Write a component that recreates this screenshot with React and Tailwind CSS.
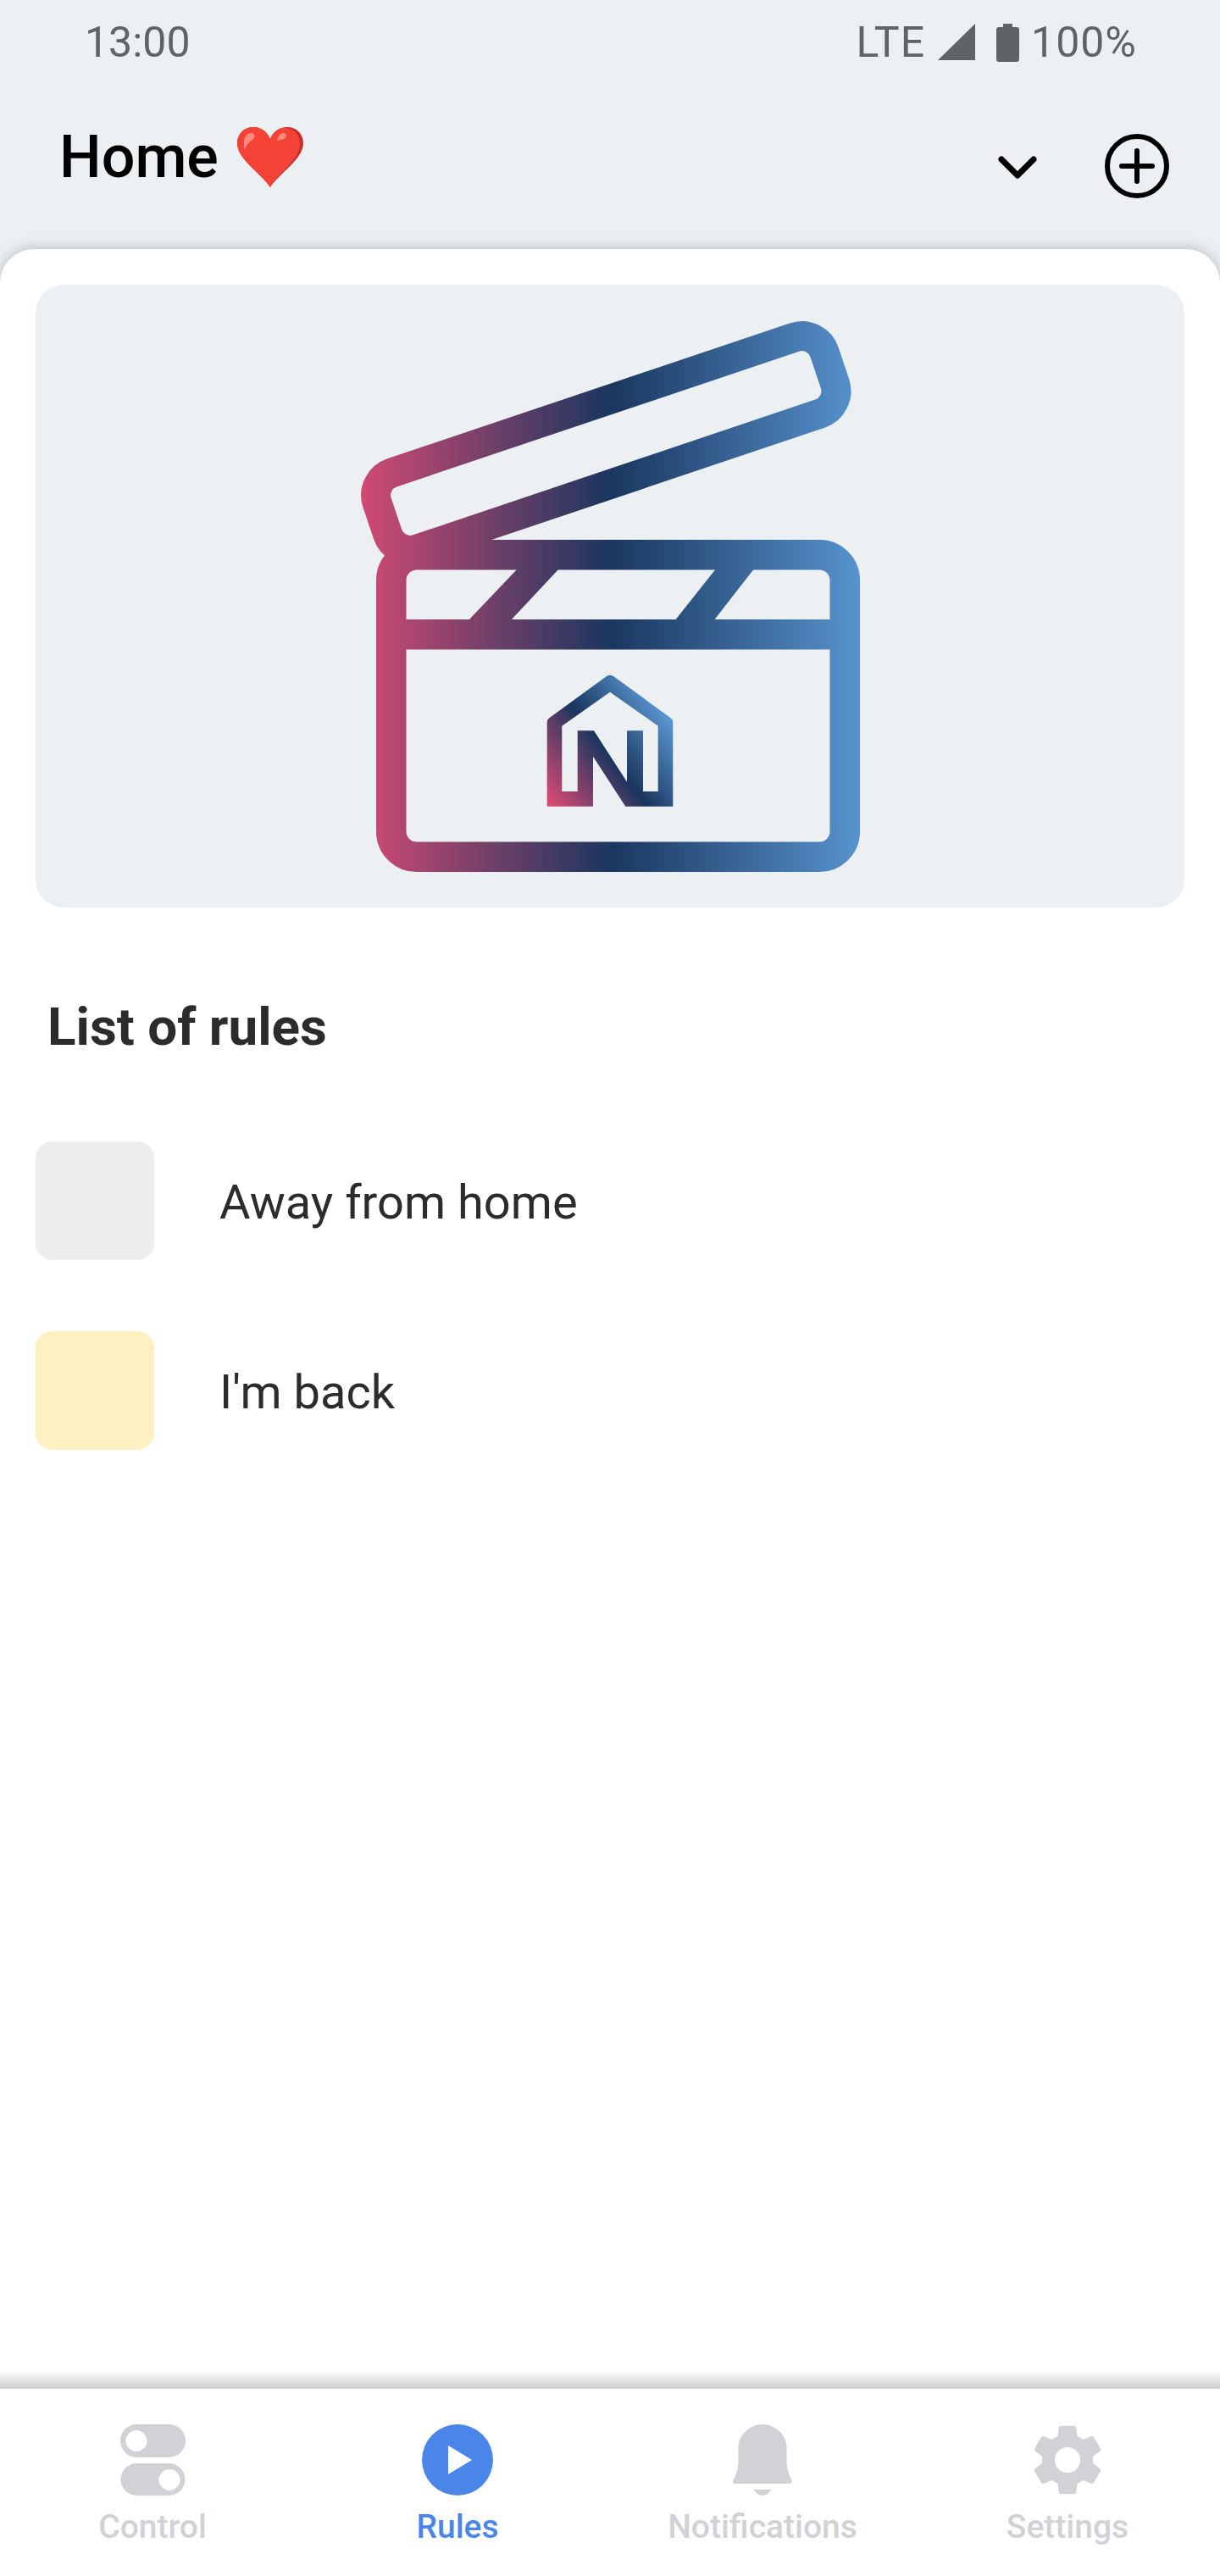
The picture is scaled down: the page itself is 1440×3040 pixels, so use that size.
import React from "react";

function SignalIcon() {
  return (
    <svg width="44" height="44" viewBox="0 0 44 44" className="fill-[#5f6368]">
      <path d="M44 0V43H0Z" />
    </svg>
  );
}

function BatteryIcon() {
  return (
    <svg width="27" height="45" viewBox="0 0 27 45" className="fill-[#5f6368]">
      <path d="M8 0h11v4h5a3 3 0 0 1 3 3v35a3 3 0 0 1-3 3H3a3 3 0 0 1-3-3V7a3 3 0 0 1 3-3h5Z" />
    </svg>
  );
}

function HeartIcon() {
  return (
    <svg width="78" height="71" viewBox="0 0 78 71" className="ml-[22px]">
      <path
        d="M39 71C28 54 0 38 0 19C0 8 8 0 19 0C28 0 35 5 39 14C43 5 50 0 59 0C70 0 78 8 78 19C78 38 50 54 39 71Z"
        fill="#c62f2b"
      />
      <path
        d="M39 71C28 54 0 38 0 19C0 8 8 0 19 0C28 0 35 5 39 14C43 5 50 0 57 1C67 2 74 9 74 20C74 38 49 54 39 71Z"
        fill="#f44336"
      />
      <path d="M9 27C6 16 9 8 16 7C21 7 22 12 18 15C13 18 10 22 9 27Z" fill="#ff8a80" />
      <path d="M47 16C48 10 52 7 55 7C59 8 59 12 55 14C52 15 49 15 47 16Z" fill="#ff8a80" />
    </svg>
  );
}

function Clapper() {
  return (
    <svg width="600" height="667" viewBox="420 370 600 667">
      <defs>
        <linearGradient id="clap" gradientUnits="userSpaceOnUse" x1="426" y1="0" x2="1015" y2="0">
          <stop offset="0" stopColor="#d04a73" />
          <stop offset="0.5" stopColor="#1a365f" />
          <stop offset="1" stopColor="#5793cd" />
        </linearGradient>
        <linearGradient
          id="clapTilted"
          gradientUnits="userSpaceOnUse"
          x1="426"
          y1="0"
          x2="1015"
          y2="0"
          gradientTransform="rotate(18.6 715.3 523)"
        >
          <stop offset="0" stopColor="#d04a73" />
          <stop offset="0.5" stopColor="#1a365f" />
          <stop offset="1" stopColor="#5793cd" />
        </linearGradient>
        <linearGradient id="logo" gradientUnits="userSpaceOnUse" x1="650" y1="950" x2="790" y2="845">
          <stop offset="0" stopColor="#d94a75" />
          <stop offset="0.52" stopColor="#1a365f" />
          <stop offset="1" stopColor="#5b98d2" />
        </linearGradient>
      </defs>
      <rect
        x="436.8"
        y="475.5"
        width="557"
        height="95"
        rx="28"
        fill="none"
        stroke="url(#clapTilted)"
        strokeWidth="35"
        transform="rotate(-18.6 715.3 523)"
      />
      <rect x="461.75" y="654.75" width="535.5" height="356.5" rx="30" fill="none" stroke="url(#clap)" strokeWidth="35.5" />
      <path d="M461 731H997V766.5H461Z" fill="url(#clap)" />
      <path d="M612 670H661L602 733H552Z" fill="url(#clap)" />
      <path d="M846 670H891L842 733H796Z" fill="url(#clap)" />
      <path
        fillRule="evenodd"
        fill="url(#logo)"
        d="M645.7 852Q645.7 849 648 847.5L716 798Q720 795.5 724 798L792 847.5Q794.3 849 794.3 852V951.7H738.3L700 892.7V951.7H645.7ZM720 816.7L663.3 856.7V934H681.7V862.3H701L740 922.7V862.3H759V934H776.7V856.7Z"
      />
    </svg>
  );
}

function ToggleIcon() {
  return (
    <svg width="77" height="84" viewBox="0 0 77 84" className="fill-[#d1d1d6]">
      <path
        fillRule="evenodd"
        d="M19.5 0h38a19.5 19.5 0 0 1 0 39h-38a19.5 19.5 0 0 1 0-39ZM19 7a12.5 12.5 0 1 0 0 25a12.5 12.5 0 0 0 0-25Z"
      />
      <path
        fillRule="evenodd"
        d="M19.5 46h38a19 19 0 0 1 0 38h-38a19 19 0 0 1 0-38ZM58 53a12.5 12.5 0 1 0 0 25a12.5 12.5 0 0 0 0-25Z"
      />
    </svg>
  );
}

function PlayIcon() {
  return (
    <svg width="84" height="84" viewBox="0 0 84 84">
      <circle cx="42" cy="42" r="42" fill="#4a86e8" />
      <path d="M31 25L59 42L31 59Z" fill="#fff" />
    </svg>
  );
}

function BellIcon() {
  return (
    <svg width="70" height="84" viewBox="0 0 70 84" className="fill-[#d1d1d6]">
      <path d="M35 0C48 0 63.5 11 63.5 27V43C63.5 52 66 59 69.5 66C70.5 68 69.5 70 67 70H3C.5 70-.5 68 .5 66C4 59 6.5 52 6.5 43V27C6.5 11 22 0 35 0Z" />
      <path d="M25 77H45C43 81 39.5 84 35 84C30.5 84 27 81 25 77Z" />
    </svg>
  );
}

function GearIcon() {
  return (
    <svg width="84" height="84" viewBox="2 2 20 20" className="fill-[#d1d1d6]">
      <path d="M19.14 12.94c.04-.3.06-.61.06-.94 0-.32-.02-.64-.07-.94l2.03-1.58c.18-.14.23-.41.12-.61l-1.92-3.32c-.12-.22-.37-.29-.59-.22l-2.39.96c-.5-.38-1.03-.7-1.62-.94l-.36-2.54c-.04-.24-.24-.41-.48-.41h-3.84c-.24 0-.43.17-.47.41l-.36 2.54c-.59.24-1.13.57-1.62.94l-2.39-.96c-.22-.08-.47 0-.59.22L2.74 8.87c-.12.21-.08.47.12.61l2.03 1.58c-.05.3-.09.63-.09.94s.02.64.07.94l-2.03 1.58c-.18.14-.23.41-.12.61l1.92 3.32c.12.22.37.29.59.22l2.39-.96c.5.38 1.03.7 1.62.94l.36 2.54c.05.24.24.41.48.41h3.84c.24 0 .44-.17.47-.41l.36-2.54c.59-.24 1.13-.56 1.62-.94l2.39.96c.22.08.47 0 .59-.22l1.92-3.32c.12-.22.07-.47-.12-.61l-2.01-1.58zM12 15.6c-1.98 0-3.6-1.62-3.6-3.6s1.62-3.6 3.6-3.6 3.6 1.62 3.6 3.6-1.62 3.6-3.6 3.6z" />
    </svg>
  );
}

function NavItem({ icon, label, active }) {
  return (
    <div className="flex flex-col items-center">
      {icon}
      <span
        className={
          "mt-[15px] text-[39px] leading-[44px] font-medium " +
          (active ? "text-[#4a86e8]" : "text-[#d1d1d6]")
        }
      >
        {label}
      </span>
    </div>
  );
}

function RuleRow({ color, name }) {
  return (
    <div className="flex items-center">
      <div className={"w-[140px] h-[140px] rounded-[20px] " + color} />
      <span className="ml-[77px] pt-[4px] text-[56px] leading-[66px] text-[#2c2c2c]">{name}</span>
    </div>
  );
}

function App() {
  return (
    <div className="w-[1440px] h-[3040px] flex flex-col overflow-hidden bg-[#ecf0f3] font-[family-name:Roboto,sans-serif]">
      <div className="h-[100px] flex items-center justify-between pl-[100px] pr-[98px] text-[#5f6368] text-[50px] leading-none">
        <span>13:00</span>
        <div className="flex items-center tracking-[1px]">
          <span>LTE</span>
          <span className="ml-[15px]">
            <SignalIcon />
          </span>
          <span className="ml-[25px]">
            <BatteryIcon />
          </span>
          <span className="ml-[14px]">100%</span>
        </div>
      </div>

      <div className="h-[194px] pt-[50px] flex items-start pl-[70px] pr-[60px]">
        <span className="text-[70px] leading-[70px] font-medium text-black">Home</span>
        <HeartIcon />
        <svg
          width="46"
          height="27"
          viewBox="0 0 46 27"
          fill="none"
          stroke="black"
          strokeWidth="7"
          strokeLinecap="round"
          strokeLinejoin="round"
          className="ml-auto mt-[34px]"
        >
          <path d="M4 4L23 23L42 4" />
        </svg>
        <svg
          width="76"
          height="76"
          viewBox="0 0 76 76"
          fill="none"
          stroke="black"
          strokeWidth="6"
          strokeLinecap="round"
          className="ml-[80px] mt-[8px]"
        >
          <circle cx="38" cy="38" r="35" />
          <path d="M38 20V56M20 38H56" />
        </svg>
      </div>

      <div className="flex-1 bg-white rounded-t-[40px] shadow-[0_-2px_16px_rgba(0,0,0,0.2)] pt-[42px] px-[42px]">
        <div className="h-[735px] rounded-[33px] bg-[#ecf0f3] flex items-center justify-center">
          <Clapper />
        </div>
        <h2 className="mt-[107px] ml-[14px] text-[62px] leading-[68px] font-bold text-[#2c2c2c]">List of rules</h2>
        <div className="mt-[101px] flex flex-col gap-[84px]">
          <RuleRow color="bg-[#eeeeee]" name="Away from home" />
          <RuleRow color="bg-[#fef0c0]" name="I'm back" />
        </div>
      </div>

      <div className="h-[22px] bg-linear-to-b from-white via-[#e8e8e8] to-[#cdcdcd]" />
      <nav className="h-[221px] bg-white pt-[42px] grid grid-cols-4">
        <NavItem icon={<ToggleIcon />} label="Control" />
        <NavItem icon={<PlayIcon />} label="Rules" active />
        <NavItem icon={<BellIcon />} label="Notifications" />
        <NavItem icon={<GearIcon />} label="Settings" />
      </nav>
    </div>
  );
}

export default App;
